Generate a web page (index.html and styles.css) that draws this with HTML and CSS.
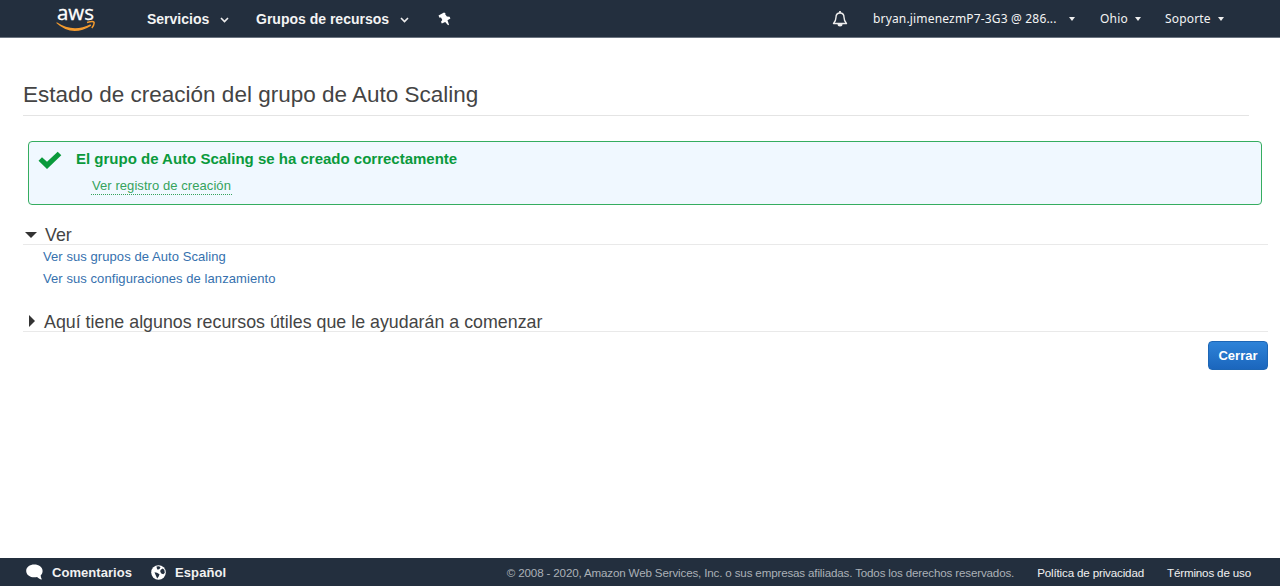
FILE: index.html
```html
<!DOCTYPE html>
<html lang="es">
<head>
<meta charset="utf-8">
<title>Auto Scaling</title>
<link rel="stylesheet" href="styles.css">
</head>
<body>
<header class="topbar">
  <svg class="logo" width="40" height="32" viewBox="0 -6 40 32" role="img" aria-label="aws">
    <text class="logo-text" x="1" y="13" textLength="37" lengthAdjust="spacingAndGlyphs">aws</text>
    <path d="M.8 15.200Q17 26 34.500 17.200l.7 1.500Q16 30.500.3 16z" fill="#f29a2e"/>
    <path d="M31 15.500Q38 13.600 38.200 15.700Q38 18.500 35.800 21" fill="none" stroke="#f29a2e" stroke-width="1.500"/>
  </svg>
  <nav class="primary">
    <a class="services">Servicios <svg class="chevron" width="9" height="6" viewBox="0 0 9 6"><path d="M1 1l3.5 3.5L8 1"/></svg></a>
    <a class="groups">Grupos de recursos <svg class="chevron" width="9" height="6" viewBox="0 0 9 6"><path d="M1 1l3.5 3.5L8 1"/></svg></a>
    <svg class="pin" width="13" height="14" viewBox="0 0 13 14"><path d="M6 .4L.5 3.500l1 2.200 1.500-.1 1.300 2.300-1.300 1.900.8 1.700 3.400-1.600 2.900 3.300.9-.5-1.500-4.400 2.900-1.900-.8-1.700-2.700-.1-1.700-2.300.3-1z" fill="#fff"/></svg>
  </nav>
  <nav class="account">
    <svg class="bell" width="16" height="17" viewBox="0 0 16 17"><path d="M1.500 13.500Q4 11 4 7.300Q4 3 8 3T12 7.300Q12 11 14.500 13.500Z" fill="none" stroke="#eee" stroke-width="1.400" stroke-linejoin="round"/><path d="M8 1v2" stroke="#eee" stroke-width="1.800"/><path d="M5.500 14a2.500 2.500 0 0 0 5 0z" fill="#eee"/></svg>
    <a class="user">bryan.jimenezmP7-3G3 @ 286... <i class="caret"></i></a>
    <a class="region">Ohio <i class="caret"></i></a>
    <a class="support">Soporte <i class="caret"></i></a>
  </nav>
</header>
<main>
  <h1><span>Estado de creación del grupo de Auto Scaling</span></h1>
  <section class="alert">
    <svg class="check" width="24" height="19" viewBox="0 0 24 19"><path d="M.5 9.700L4 6.200l5 4.600L19.700.7l3.600 3.600L9 18z" fill="#0a9a3c"/></svg>
    <div>
      <h2>El grupo de Auto Scaling se ha creado correctamente</h2>
      <a class="log">Ver registro de creación</a>
    </div>
  </section>
  <section class="view">
    <h3><svg class="tri" width="12" height="6" viewBox="0 0 12 6"><path d="M0 0h12L6 6z"/></svg><span>Ver</span></h3>
    <ul>
      <li><a>Ver sus grupos de Auto Scaling</a></li>
      <li><a>Ver sus configuraciones de lanzamiento</a></li>
    </ul>
  </section>
  <section class="resources">
    <h3><svg class="tri-right" width="6" height="12" viewBox="0 0 6 12"><path d="M0 0v12l6-6z"/></svg><span>Aquí tiene algunos recursos útiles que le ayudarán a comenzar</span></h3>
  </section>
  <button class="close">Cerrar</button>
</main>
<footer>
  <svg class="bubble" width="17" height="16" viewBox="0 0 17 16"><path d="M8.300.5C3.800.5.2 3.200.2 6.900s3.600 6.400 8.100 6.400c1 0 2-.1 2.800-.4 1 1.200 2.500 2.200 4.800 2.500-.9-1.300-1.300-2.700-1.200-4.100 1.200-1.100 1.900-2.700 1.900-4.400C16.600 3.200 12.800.5 8.300.5z" fill="#fff"/></svg>
  <a class="feedback">Comentarios</a>
  <svg class="globe" width="15" height="15" viewBox="0 0 15 15"><circle cx="7.500" cy="7.500" r="7.300" fill="#fff"/><path d="M5.500 1.500l2.500-.3 1.500 1-1 1.800-1.800.7-.8-1.200zM9.500 5l2-1.500 1.800 1.200.5 3-1.500 1.500-2-.8-1-1.700zM3.500 7.200l2.500.5 2.500 1.500-.7 2-1.600 2.300-1.500-3.200z" fill="#232f3e"/></svg>
  <a class="language">Español</a>
  <span class="copy">© 2008 - 2020, Amazon Web Services, Inc. o sus empresas afiliadas. Todos los derechos reservados.</span>
  <a class="privacy">Política de privacidad</a>
  <a class="terms">Términos de uso</a>
</footer>
</body>
</html>
```
FILE: styles.css
```css
* { box-sizing: border-box; }
body { margin: 0; height: 586px; display: flex; flex-direction: column; background: #fff; font-family: "Liberation Sans", Arial, sans-serif; color: #444; overflow: hidden; }
a { white-space: nowrap; }
.topbar { height: 38px; background: #232f3e; border-bottom: 1px solid #6b7480; display: flex; align-items: center; color: #f4f4f4; }
.logo { margin: 0 0 3px 56px; overflow: visible; }
.logo-text { font: 20px "Open Sans", sans-serif; fill: #fff; stroke: #fff; stroke-width: .3px; }
.primary { display: flex; align-items: center; margin-left: 51px; font-size: 14px; font-weight: bold; }
.primary a, .account a { display: flex; align-items: center; }
.services { width: 109px; }
.groups { width: 182px; }
.chevron { margin: 3px 0 0 11px; fill: none; stroke: #eee; stroke-width: 1.6; }
.account { display: flex; align-items: center; margin-left: auto; width: 448px; font: 12px "Noto Sans", sans-serif; letter-spacing: .17px; }
.bell { margin-right: 25px; }
.user { width: 227px; }
.region { width: 65px; }
.caret { border: 3.5px solid transparent; border-top: 4px solid #eee; border-bottom: 0; margin: 1px 0 0 7px; }
.user .caret { margin-left: 12px; }
main { flex: 1; display: flex; flex-direction: column; padding: 39px 12px 0 23px; }
h1, h2, h3 { margin: 0; white-space: nowrap; }
h1 { height: 39px; margin-right: 19px; border-bottom: 1px solid #e4e4e4; font-size: 22.5px; font-weight: normal; line-height: 35px; }
.alert { display: flex; height: 64px; margin: 25px 6px 0 5px; border: 1px solid #35ad60; border-radius: 4px; background: #f0f8ff; }
.check { margin: 9px 14px 0 9px; }
h2 { margin-top: 7px; font-size: 15px; line-height: 20px; color: #0a9a3c; }
.log { display: inline-block; margin: 9px 0 0 15px; padding: 0 1px; height: 17px; line-height: 16px; font-size: 13px; letter-spacing: .07px; color: #35a35c; border-bottom: 1px dotted #35a35c; }
h3 { display: flex; align-items: center; border-bottom: 1px solid #e9e9e9; font-size: 17.8px; letter-spacing: .02px; font-weight: normal; height: 20px; fill: #333; }
h3 span { padding-top: 2px; }
.view { margin-top: 20px; }
.tri { margin: 0 8px 0 2px; }
.tri-right { margin: 0 9px 1px 6px; }
ul { margin: 1px 0 0; padding: 0 0 0 20px; list-style: none; font-size: 13px; line-height: 21.5px; letter-spacing: .07px; color: #3671ae; }
.resources { margin-top: 23px; }
.close { align-self: flex-end; margin-top: 9px; width: 60px; height: 29px; padding: 0; border: 1px solid #1d66b5; border-radius: 4px; background: linear-gradient(#2e83d8, #1b66bd); color: #fff; font: bold 13px "Liberation Sans", sans-serif; }
footer { height: 28px; background: #232f3e; color: #f1f1f1; display: flex; align-items: center; font-size: 12px; white-space: nowrap; }
.bubble { margin: 0 9px 0 26px; }
.feedback, .language { font-size: 13px; font-weight: bold; }
.feedback { width: 99px; letter-spacing: .05px; }
.language { margin-left: 9px; letter-spacing: .1px; }
.copy, .privacy, .terms { font-size: 11.6px; letter-spacing: -.155px; }
.copy { margin-left: auto; color: #abb1b7; }
.privacy { margin-left: 23px; }
.terms { margin: 0 29px 0 23px; }
```
